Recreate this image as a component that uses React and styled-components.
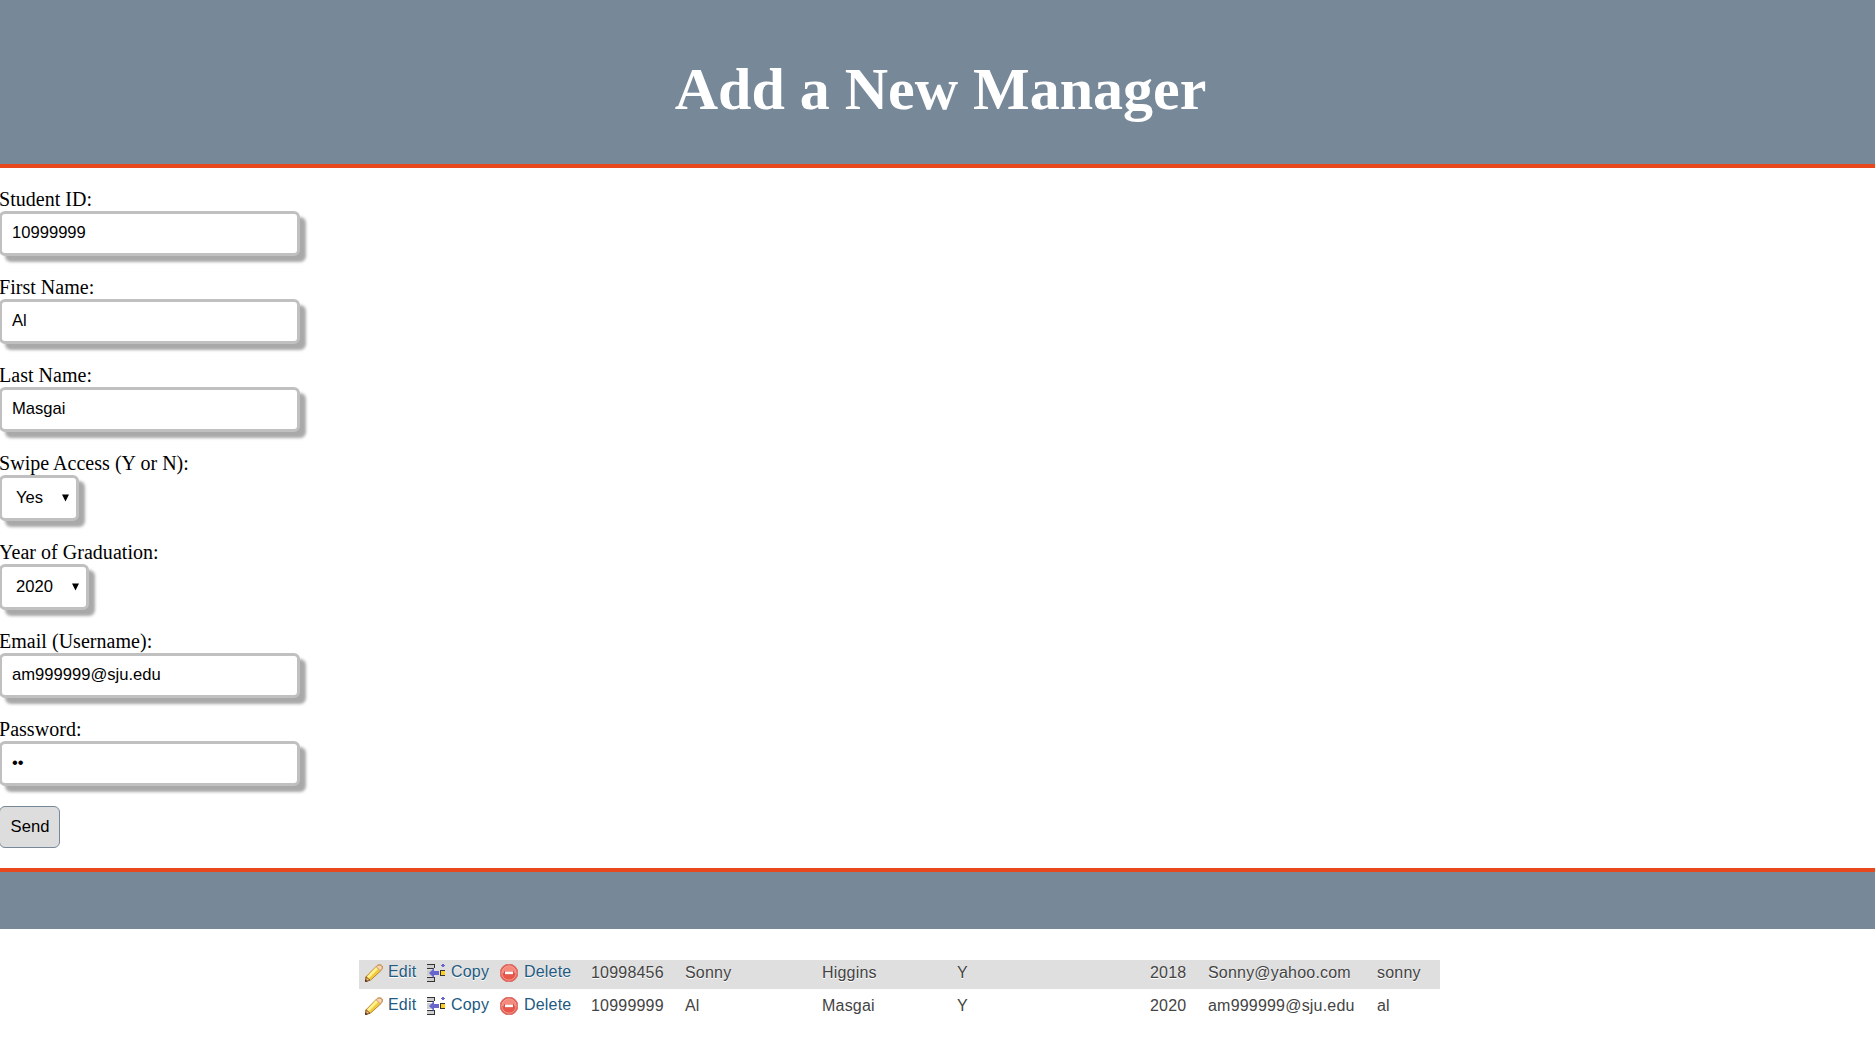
import React from "react";
import styled, { createGlobalStyle } from "styled-components";

const GlobalStyle = createGlobalStyle`
  *, *::before, *::after { box-sizing: border-box; }
  body {
    margin: 0;
    background: #fff;
    color: #000;
    font: 20px/22px "Liberation Serif", "Times New Roman", serif;
    overflow: hidden;
  }
`;

const Header = styled.header`
  height: 168px;
  padding: 55px 0 0 6px;
  background: #778899;
  border-bottom: 4px solid #e9481c;
  text-align: center;
`;

const Title = styled.h1`
  margin: 0;
  color: #fff;
  font-size: 60px;
  line-height: 68px;
`;

const Form = styled.form`
  display: flex;
  flex-direction: column;
  align-items: flex-start;
  height: 700px;
  padding-top: 21px;
  margin-left: -1px;
`;

const Field = styled.div`
  display: flex;
  flex-direction: column;
  align-items: flex-start;
  height: ${(p) => p.$height || 88}px;
`;

const Label = styled.label`
  height: 22px;
  line-height: 20px;
  letter-spacing: 0.03px;
  white-space: nowrap;
`;

const Input = styled.input`
  width: 301px;
  height: 45px;
  margin: 0;
  padding: 0 10px 2px;
  border: 3px solid #c0c0c0;
  border-radius: 6px;
  outline: none;
  background: #fff;
  color: #000;
  box-shadow: 6px 6px 3px #a9a9a9;
  font: 16.6px "Liberation Sans", Arial, sans-serif;
`;

const SelectBox = styled.div`
  display: flex;
  align-items: center;
  justify-content: space-between;
  width: ${(p) => p.$width}px;
  height: 46px;
  padding: 0 7px 2px 14px;
  border: 3px solid #c0c0c0;
  border-radius: 6px;
  background: #fff;
  box-shadow: 6px 6px 3px #a9a9a9;
`;

const Select = styled.select`
  appearance: none;
  width: 46px;
  margin: 0;
  padding: 0;
  border: 0;
  background: transparent;
  color: #000;
  font: 16.6px "Liberation Sans", Arial, sans-serif;
`;

const SendButton = styled.button`
  width: 61px;
  height: 42px;
  margin: 0;
  padding: 0 0 0 1px;
  border: 1px solid #778899;
  border-radius: 6px;
  background: #dddddd;
  color: #000;
  font: 16.6px "Liberation Sans", Arial, sans-serif;
`;

const Footer = styled.footer`
  height: 61px;
  background: #778899;
  border-top: 4px solid #e9481c;
`;

const Records = styled.section`
  width: 1081px;
  margin: 31px 0 0 359px;
  color: #444;
  font: 16px/22px "Liberation Sans", Arial, sans-serif;
  letter-spacing: 0.2px;
`;

const Row = styled.div`
  display: grid;
  grid-template-columns: 62px 73px 91px 94px 137px 135px 193px 58px 169px 1fr;
  height: 29px;
  margin-bottom: 4px;
  padding-left: 6px;
  background: ${(p) => (p.$shaded ? "#dfdfdf" : "#fff")};
  text-shadow: 0 1px 0 #fff;
  white-space: nowrap;
`;

const Cell = styled.span`
  padding-top: 2px;
`;

const Action = styled.a`
  display: flex;
  gap: ${(p) => p.$gap || 6}px;
  padding-top: 1px;
  color: #235a81;
`;

const Icon = styled.svg`
  flex: none;
  width: 18px;
  height: 18px;
  margin-top: 3px;
`;

const ArrowIcon = styled.svg`
  flex: none;
  width: 7px;
  height: 8px;
  margin-top: 2px;
`;

const Arrow = () => (
  <ArrowIcon viewBox="0 0 7 8">
    <path d="M0 .5H7L3.5 7.5Z" fill="#000" />
  </ArrowIcon>
);

const PencilIcon = () => (
  <Icon viewBox="0 0 18 18">
    <path d="M.5 17.3 1 12.8 11.8 1.8C13.3.2 18.3.2 17.5 4.2L16.2 6.4 5.5 16.2Z" fill="#f5cf45" stroke="#b98435" />
    <path d="M3 13.3 12 4" stroke="#fff391" strokeWidth="2.6" />
    <path d="M5 14.8 14 6" stroke="#efc83c" strokeWidth="1.5" />
    <path d="M11.2 2.8C13 .5 17.8.7 17.1 4.2L15.3 6.7Z" fill="#f9d6b5" stroke="#cf9c73" />
    <path d="M1 12.8 5 16.2 1 17.2Z" fill="#e9c796" stroke="#8a5726" />
    <path d="M0 15.2 2.8 17.8H0Z" fill="#4d2b12" />
  </Icon>
);

const CopyIcon = () => (
  <Icon viewBox="0 0 18 18" shapeRendering="crispEdges">
    <path d="M0 1H7V4H0ZM0 6H4V12H0ZM0 14H7V17H0Z" fill="#cecece" />
    <path d="M0 0H8V1H0ZM7 1H8V4H7ZM0 4H7V5H0ZM0 13H8V14H0ZM7 14H8V17H7ZM0 17H8V18H0Z" fill="#333" />
    <path d="M2 9 7 4V7H12V11H7V14Z" fill="#6666cc" shapeRendering="auto" />
    <path d="M13 6H18V12H13Z" fill="#333" />
    <path d="M14 7H18V11H14Z" fill="#ffcc22" />
    <path d="M15 0H17V1H18V2H17V3H15V2H14V1H15Z" fill="#6666cc" />
  </Icon>
);

const DeleteIcon = () => (
  <Icon viewBox="0 0 18 18">
    <path d="M6 .6H12L15.3 2.7 17.4 6V12L15.3 15.3 12 17.4H6L2.7 15.3.6 12V6L2.7 2.7Z" fill="#e9564a" stroke="#d8716a" />
    <path d="M6 2H12L16 6V9H2V6Z" fill="#f4897c" />
    <circle cx="9" cy="9" r="7.2" fill="none" stroke="#f0a196" />
    <path d="M4 7H14V11H4Z" fill="#d95045" />
    <path d="M5 7.5H13V10.2H5Z" fill="#fff" />
  </Icon>
);

const TextField = ({ label, value, type = "text", height }) => (
  <Field $height={height}>
    <Label>{label}</Label>
    <Input type={type} defaultValue={value} />
  </Field>
);

const SelectField = ({ label, value, width }) => (
  <Field $height={89}>
    <Label>{label}</Label>
    <SelectBox $width={width}>
      <Select defaultValue={value}>
        <option>{value}</option>
      </Select>
      <Arrow />
    </SelectBox>
  </Field>
);

const managers = [
  ["10998456", "Sonny", "Higgins", "Y", "2018", "Sonny@yahoo.com", "sonny"],
  ["10999999", "Al", "Masgai", "Y", "2020", "am999999@sju.edu", "al"],
];

export default function App() {
  return (
    <>
      <GlobalStyle />
      <Header>
        <Title>Add a New Manager</Title>
      </Header>
      <Form>
        <TextField label="Student ID:" value="10999999" />
        <TextField label="First Name:" value="Al" />
        <TextField label="Last Name:" value="Masgai" />
        <SelectField label="Swipe Access (Y or N):" value="Yes" width={80} />
        <SelectField label="Year of Graduation:" value="2020" width={90} />
        <TextField label="Email (Username):" value="am999999@sju.edu" />
        <TextField label="Password:" type="password" value="al" height={87} />
        <SendButton type="button">Send</SendButton>
      </Form>
      <Footer />
      <Records>
        {managers.map((row, i) => (
          <Row key={row[0]} $shaded={i === 0}>
            <Action $gap={5}><PencilIcon />Edit</Action>
            <Action><CopyIcon />Copy</Action>
            <Action><DeleteIcon />Delete</Action>
            {row.map((text, n) => (
              <Cell key={n}>{text}</Cell>
            ))}
          </Row>
        ))}
      </Records>
    </>
  );
}
